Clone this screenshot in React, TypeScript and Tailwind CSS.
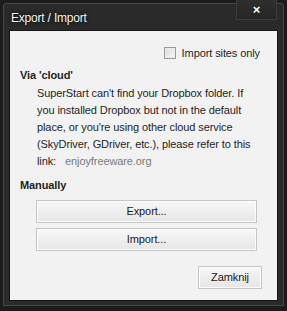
import React from 'react';

const ui = { fontFamily: '"Segoe UI", "Liberation Sans", Arial, sans-serif' };

function Btn({ label, className = '' }: { label: string; className?: string }) {
  return (
    <button
      className={`flex items-center justify-center border border-[#c6c6c6] bg-gradient-to-b from-[#f7f7f7] to-[#e6e6e6] text-[11px] text-[#1a1a1a] shadow-[inset_0_0_0_1px_#fcfcfc] ${className}`}
    >
      {label}
    </button>
  );
}

export default function App() {
  return (
    <div className="h-[311px] w-[287px] bg-[#1c1c1c] p-[3px]" style={ui}>
      <div className="flex h-[303px] flex-col rounded-t-[3px] border border-[#474747] bg-[#2a2a2a] px-[5px] pb-[4px]">
        {/* title bar */}
        <div className="flex h-[26px] shrink-0 items-start justify-between">
          <span className="pl-[2px] pt-[5px] text-[12px] tracking-[-0.2px] text-[#f2f2f2] [text-shadow:0_0_4px_#000]">Export / Import</span>
          <div className="mr-[1px] -mt-[4px] flex h-[20px] w-[41px] items-center justify-center border border-[#3c3c3c] border-t-0 bg-gradient-to-b from-[#2f2f2f] to-[#262626] text-[13px] font-bold leading-none text-white">
            ×
          </div>
        </div>

        {/* panel */}
        <div className="flex flex-1 flex-col border border-[#151515] bg-[#f2f2f2] px-[10px] pb-[11px] text-[11px] tracking-[-0.1px] text-[#1e1e1e]">
          <label className="mt-[14px] flex items-center justify-end gap-[6px] pr-[7px]">
            <span className="h-[12px] w-[12px] border border-[#9a9a9a] bg-gradient-to-br from-[#dcdcdc] to-[#f8f8f8] shadow-[inset_0_0_0_1px_#ececec]" />
            <span>Import sites only</span>
          </label>

          <div className="mt-[5px] font-semibold leading-[17px]">Via 'cloud'</div>
          <p className="mt-[1px] whitespace-nowrap pl-[17px] leading-[17px]">
            SuperStart can't find your Dropbox folder. If
            <br />
            you installed Dropbox but not in the default
            <br />
            place, or you're using other cloud service
            <br />
            (SkyDriver, GDriver, etc.), please refer to this
            <br />
            link:<span className="ml-[9px] text-[#7a7a7a]">enjoyfreeware.org</span>
          </p>

          <div className="mt-[7px] font-semibold leading-[17px]">Manually</div>
          <div className="mt-[6px] flex flex-col gap-[5px] pl-[16px] pr-[10px]">
            <Btn label="Export..." className="h-[23px] w-full" />
            <Btn label="Import..." className="h-[23px] w-full" />
          </div>

          <div className="mt-auto flex justify-end pr-[5px]">
            <Btn label="Zamknij" className="h-[23px] w-[64px]" />
          </div>
        </div>
      </div>
    </div>
  );
}
